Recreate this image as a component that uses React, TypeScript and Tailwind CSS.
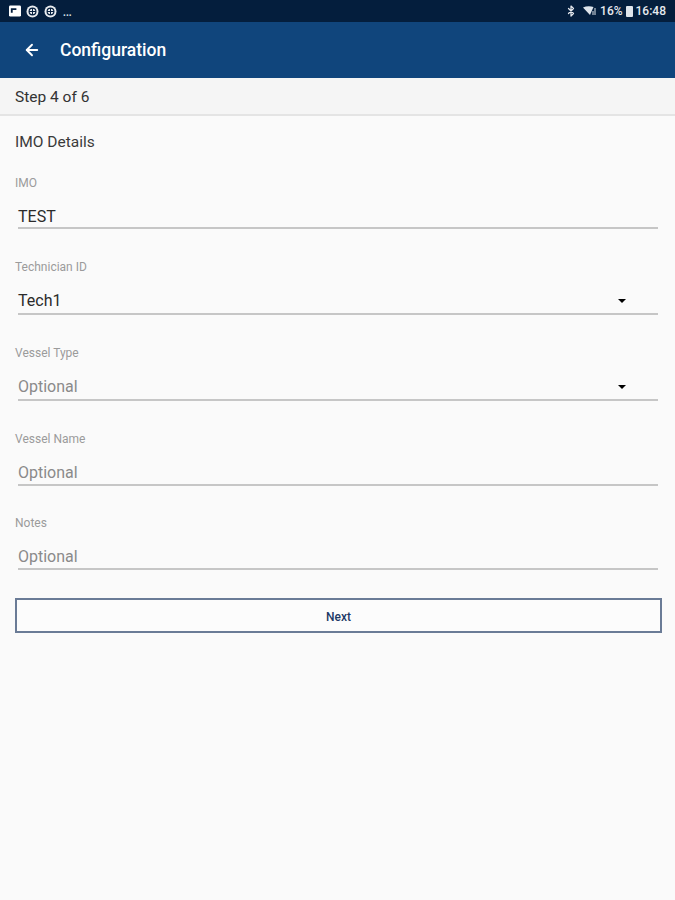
import React from "react";
import { ArrowLeft, Bluetooth } from "lucide-react";

const Field = ({
  label,
  value,
  placeholder,
  select,
  className,
  rowHeight,
}: {
  label: string;
  value: string;
  placeholder?: boolean;
  select?: boolean;
  className: string;
  rowHeight: string;
}) => (
  <div className={className}>
    <div className="text-[12px] leading-[14px] text-[#9b9b9b]">{label}</div>
    <div className={`ml-[3px] mr-[2px] mt-[12px] flex items-start justify-between border-b-2 border-[#c6c6c6] pt-[5px] ${rowHeight}`}>
      <span className={`text-[16px] leading-[20px] ${placeholder ? "text-[#8a8a8a]" : "text-[#2b2b2b]"}`}>{value}</span>
      {select && <span className="mr-[32px] mt-[8px] h-0 w-0 border-x-[4px] border-t-[4px] border-x-transparent border-t-black" />}
    </div>
  </div>
);

export default function App() {
  return (
    <div className="flex h-[900px] w-[675px] flex-col overflow-hidden bg-[#fafafa] font-['Roboto',sans-serif]">
      {/* Status bar */}
      <div className="flex h-[22px] items-center justify-between bg-[#041e3d] pl-[9px] pr-[9px] text-white">
        <div className="flex items-center gap-[5px]">
          <svg width="12" height="12" viewBox="0 0 13 12">
            <rect width="13" height="12" rx="1.5" fill="#fff" />
            <path d="M2 3h6v2H4v3H2z" fill="#041e3d" />
          </svg>
          <Wheel />
          <Wheel />
          <span className="ml-[1px] mt-[3px] text-[10px] leading-[12px] font-bold text-[#dfe5ec]">...</span>
        </div>
        <div className="flex items-center gap-[3px] text-[12px] leading-[14px] font-medium text-[#e6e9ee]">
          <Bluetooth size={12} strokeWidth={2.5} />
          <svg width="14" height="11" viewBox="0 0 14 11" className="ml-[3px]">
            <path d="M0 1.5C3 .2 7 0 10.5 1L7 9z" fill="#dfe5ec" />
            <path d="M11.5 2h1v7h-1zM9.5 5h1v4h-1z" fill="#dfe5ec" />
          </svg>
          <span>16%</span>
          <span className="h-[11px] w-[7px] rounded-[1px] bg-[#dfe5ec]" />
          <span>16:48</span>
        </div>
      </div>

      {/* Toolbar */}
      <div className="flex h-[56px] items-center bg-[#10457c] pl-[23px] text-white">
        <ArrowLeft size={18} strokeWidth={2.5} />
        <span className="ml-[19px] text-[17.5px] font-medium leading-[22px]">Configuration</span>
      </div>

      {/* Step */}
      <div className="flex h-[38px] items-center border-b-2 border-[#e4e4e4] bg-[#f5f5f5] pl-[15px] pt-[4px] text-[15.5px] text-[#333333]">
        Step 4 of 6
      </div>

      <div className="flex flex-col px-[15px]">
        <div className="mt-[17px] text-[15.5px] leading-[18px] text-[#3a3a3a]">IMO Details</div>
        <Field className="mt-[25px]" rowHeight="h-[27px]" label="IMO" value="TEST" />
        <Field className="mt-[31px]" rowHeight="h-[29px]" label="Technician ID" value="Tech1" select />
        <Field className="mt-[31px]" rowHeight="h-[29px]" label="Vessel Type" value="Optional" placeholder select />
        <Field className="mt-[31px]" rowHeight="h-[28px]" label="Vessel Name" value="Optional" placeholder />
        <Field className="mt-[30px]" rowHeight="h-[28px]" label="Notes" value="Optional" placeholder />
        <button className="mt-[28px] h-[35px] w-[647px] border-2 border-[#6a7b96] bg-[#fcfcfc] pt-[2px] text-[12px] font-medium text-[#1c3a66]">
          Next
        </button>
      </div>
    </div>
  );
}

function Wheel() {
  return (
    <svg width="13" height="13" viewBox="0 0 13 13">
      <circle cx="6.5" cy="6.5" r="6" fill="#e8ebef" />
      <circle cx="6.5" cy="6.5" r="3.4" fill="none" stroke="#041e3d" strokeWidth="1.2" />
      <path d="M6.5 3v7M3 6.5h7" stroke="#041e3d" strokeWidth="1" />
    </svg>
  );
}
